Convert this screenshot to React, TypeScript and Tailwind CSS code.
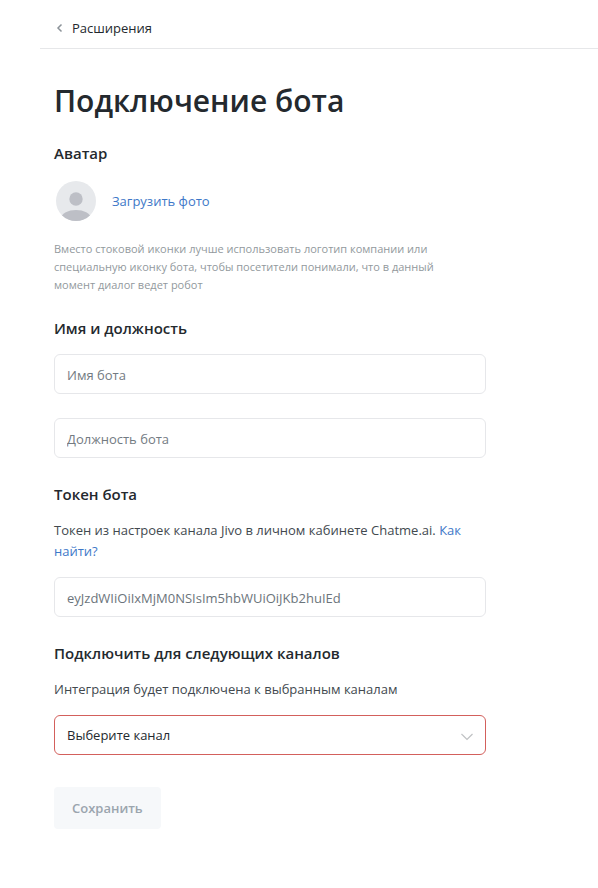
import { useState } from 'react';
import type { ReactNode } from 'react';

const inputClass =
  'block h-10 w-full rounded-md border border-[#e6e7ea] bg-white px-3 pt-0.5 text-[13px] text-[#6b747b] placeholder:text-[#737b82] placeholder:opacity-100 outline-none';

function SectionTitle({ children }: { children: ReactNode }) {
  return <h2 className="text-[15px] leading-6 font-semibold text-[#24292e]">{children}</h2>;
}

function AvatarPlaceholder() {
  return (
    <svg width="40" height="40" viewBox="0 0 40 40" aria-hidden="true">
      <defs>
        <clipPath id="avatar-circle">
          <circle cx="20" cy="20" r="20" />
        </clipPath>
      </defs>
      <g clipPath="url(#avatar-circle)">
        <rect width="40" height="40" fill="#e7e9ec" />
        <circle cx="20" cy="18" r="6.7" fill="#bdbfc6" />
        <ellipse cx="20" cy="37" rx="14.5" ry="8" fill="#bdbfc6" />
      </g>
    </svg>
  );
}

export default function App() {
  const [name, setName] = useState('');
  const [position, setPosition] = useState('');
  const [token, setToken] = useState('eyJzdWIiOiIxMjM0NSIsIm5hbWUiOiJKb2huIEd');

  return (
    <div className="min-h-screen bg-white pl-10 font-['Open_Sans','Noto_Sans',sans-serif] text-[13px] text-[#24292e]">
      <header className="flex border-b border-[#e6e7e9] px-4 pt-4 pb-2">
        <a href="#extensions" className="flex items-center gap-2 leading-6">
          <svg width="8" height="10" viewBox="0 0 8 10" fill="none" aria-hidden="true">
            <path d="M5.5 1.5 2 5l3.5 3.5" stroke="#8c9399" strokeWidth="1.5" />
          </svg>
          Расширения
        </a>
      </header>

      <main className="px-3.5 py-8">
        <h1 className="text-[30px] leading-10 font-semibold">Подключение бота</h1>

        <form className="mt-5 max-w-[432px]" onSubmit={(e) => e.preventDefault()}>
          <section>
            <SectionTitle>Аватар</SectionTitle>
            <div className="mt-4 flex items-center gap-4 pl-0.5">
              <AvatarPlaceholder />
              <button type="button" className="pt-0.5 text-[#3e78c8]">
                Загрузить фото
              </button>
            </div>
            <p className="mt-[19px] max-w-[400px] text-[11px] leading-[18px] text-[#92999d]">
              Вместо стоковой иконки лучше использовать логотип компании или специальную иконку
              бота, чтобы посетители понимали, что в данный момент диалог ведет робот
            </p>
          </section>

          <section className="mt-[22px]">
            <SectionTitle>Имя и должность</SectionTitle>
            <div className="mt-3.5 space-y-6">
              <input
                className={inputClass}
                placeholder="Имя бота"
                aria-label="Имя бота"
                value={name}
                onChange={(e) => setName(e.target.value)}
              />
              <input
                className={inputClass}
                placeholder="Должность бота"
                aria-label="Должность бота"
                value={position}
                onChange={(e) => setPosition(e.target.value)}
              />
            </div>
          </section>

          <section className="mt-6">
            <SectionTitle>
              <label htmlFor="token">Токен бота</label>
            </SectionTitle>
            <p className="mt-3.5 leading-[21px] text-[#42494f]">
              Токен из настроек канала Jivo в личном кабинете Chatme.ai.{' '}
              <a href="#token-help" className="text-[#3e78c8]">
                Как найти?
              </a>
            </p>
            <input
              id="token"
              className={`${inputClass} mt-[15px]`}
              value={token}
              onChange={(e) => setToken(e.target.value)}
            />
          </section>

          <section className="mt-6">
            <SectionTitle>
              <label htmlFor="channel">Подключить для следующих каналов</label>
            </SectionTitle>
            <p className="mt-3.5 leading-[21px] text-[#42494f]">
              Интеграция будет подключена к выбранным каналам
            </p>
            <div className="relative mt-[15px]">
              <select
                id="channel"
                className="block h-10 w-full appearance-none rounded-md border border-[#d3605c] bg-white px-3 pt-0.5 text-[13px] outline-none"
              >
                <option>Выберите канал</option>
              </select>
              <svg
                className="pointer-events-none absolute top-[18px] right-3"
                width="14"
                height="8"
                viewBox="0 0 14 8"
                fill="none"
                aria-hidden="true"
              >
                <path d="m1.5 1 5.5 5.5L12.5 1" stroke="#bfc1c3" strokeWidth="1.2" />
              </svg>
            </div>
          </section>

          <button
            type="submit"
            disabled
            className="mt-8 h-[42px] rounded bg-[#f6f8fa] px-[18px] pt-0.5 font-semibold text-[#9ba5ae]"
          >
            Сохранить
          </button>
        </form>
      </main>
    </div>
  );
}
